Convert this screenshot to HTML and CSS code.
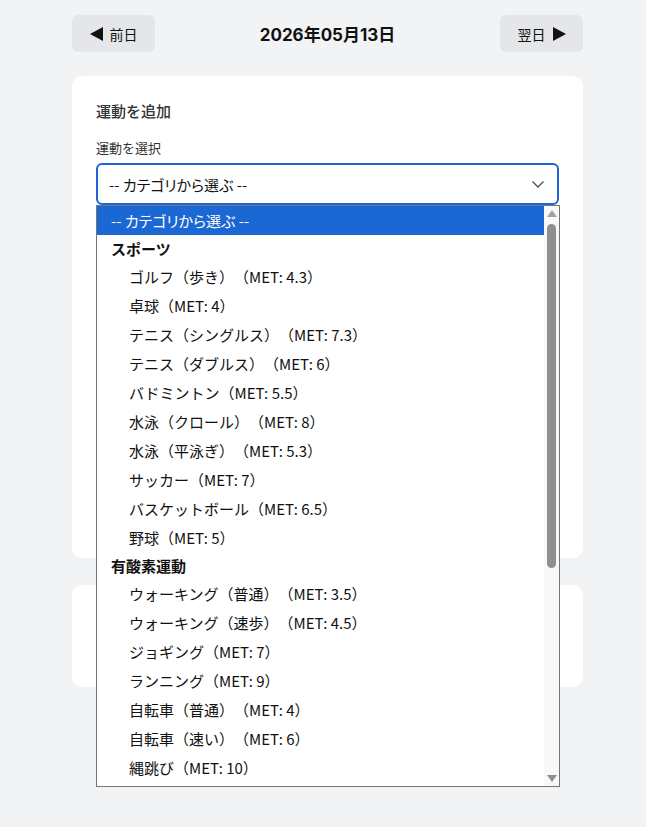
FILE: index.html
```html
<!DOCTYPE html>
<html lang="ja">
<head>
  <meta charset="UTF-8" />
  <title>運動記録</title>
  <link rel="stylesheet" href="styles.css">
</head>
<body>
  <div class="page">
    <div class="date-nav">
      <button class="nav-btn">
        <svg class="tri" width="13" height="14" viewBox="0 0 13 14"><path d="M0 7 L13 0 L13 14 Z" fill="#111"/></svg>
        <span>前日</span>
      </button>
      <h1 class="date-title">2026年05月13日</h1>
      <button class="nav-btn">
        <span>翌日</span>
        <svg class="tri" width="13" height="14" viewBox="0 0 13 14"><path d="M13 7 L0 0 L0 14 Z" fill="#111"/></svg>
      </button>
    </div>

    <div class="card card-add">
      <h2 class="card-title">運動を追加</h2>
      <label class="field-label">運動を選択</label>
      <div class="select-wrap">
        <div class="select-box">
          <span class="placeholder">-- カテゴリから選ぶ --</span>
          <svg class="chevron" width="14" height="14" viewBox="0 0 14 14"><path d="M1.5 4.5 L7 10 L12.5 4.5" fill="none" stroke="#555" stroke-width="1.4"/></svg>
        </div>

        <!-- open list of the select -->
        <div class="dropdown">
          <ul class="options">
            <li class="opt selected"><span class="placeholder">-- カテゴリから選ぶ --</span></li>
            <li class="group">スポーツ</li>
            <li class="opt sub">ゴルフ（歩き）（MET: 4.3）</li>
            <li class="opt sub">卓球（MET: 4）</li>
            <li class="opt sub">テニス（シングルス）（MET: 7.3）</li>
            <li class="opt sub">テニス（ダブルス）（MET: 6）</li>
            <li class="opt sub">バドミントン（MET: 5.5）</li>
            <li class="opt sub">水泳（クロール）（MET: 8）</li>
            <li class="opt sub">水泳（平泳ぎ）（MET: 5.3）</li>
            <li class="opt sub">サッカー（MET: 7）</li>
            <li class="opt sub">バスケットボール（MET: 6.5）</li>
            <li class="opt sub">野球（MET: 5）</li>
            <li class="group">有酸素運動</li>
            <li class="opt sub">ウォーキング（普通）（MET: 3.5）</li>
            <li class="opt sub">ウォーキング（速歩）（MET: 4.5）</li>
            <li class="opt sub">ジョギング（MET: 7）</li>
            <li class="opt sub">ランニング（MET: 9）</li>
            <li class="opt sub">自転車（普通）（MET: 4）</li>
            <li class="opt sub">自転車（速い）（MET: 6）</li>
            <li class="opt sub">縄跳び（MET: 10）</li>
          </ul>
          <div class="scrollbar">
            <span class="arrow up"></span>
            <div class="track"><div class="thumb"></div></div>
            <span class="arrow down"></span>
          </div>
        </div>
      </div>
    </div>

    <div class="card card-list"></div>
  </div>
</body>
</html>
```

FILE: styles.css
```css
html, body {
  min-height: 100%;
}

body {
  margin: 0;
  font-family: Inter, "Noto Sans CJK JP", sans-serif;
  background: #f2f3f5;
  color: #111;
}

.page {
  width: 511px;
  margin-left: 72px;
  padding-top: 15px;
  padding-bottom: 140px;
  text-spacing-trim: space-all;
}

.date-nav {
  display: flex;
  justify-content: space-between;
  align-items: center;
  height: 37px;
}

.nav-btn {
  background: #e4e6ea;
  border: none;
  border-radius: 6px;
  width: 83px;
  height: 37px;
  padding: 0;
  display: flex;
  align-items: center;
  justify-content: center;
  gap: 7px;
  font-family: "Noto Sans CJK JP", sans-serif;
  font-size: 14px;
  color: #111;
}

.date-title {
  margin: 0;
  font-size: 17px;
  font-weight: 700;
}

.card {
  background: #fff;
  border-radius: 10px;
  padding: 24px;
}

.card-add {
  margin-top: 24px;
  height: 434px;
}

.card-list {
  margin-top: 27px;
  height: 54px;
}

.card-title {
  margin: 0;
  font-family: "Noto Sans CJK JP", sans-serif;
  font-size: 15px;
  font-weight: 500;
  color: #333;
  line-height: 22px;
}

.field-label {
  display: block;
  margin-top: 17px;
  font-family: "Noto Sans CJK JP", sans-serif;
  font-size: 13px;
  color: #333;
  line-height: 18px;
}

.select-wrap {
  position: relative;
  margin-top: 6px;
}

.select-box {
  height: 38px;
  border: 2px solid #1f63d6;
  border-radius: 6px;
  display: flex;
  align-items: center;
  justify-content: space-between;
  padding: 0 12px 0 11px;
  font-family: "Noto Sans CJK JP", sans-serif;
  font-size: 15px;
}

.placeholder {
  font-feature-settings: "palt";
}

.dropdown {
  position: absolute;
  left: 0;
  top: 42px;
  width: 462px;
  height: 580px;
  background: #fff;
  border: 1px solid #767676;
  display: flex;
  z-index: 5;
}

.options {
  list-style: none;
  margin: 0;
  padding: 0;
  flex: 1;
  font-family: "Noto Sans CJK JP", sans-serif;
  font-size: 15px;
  color: #111;
}

.options li {
  height: 29px;
  line-height: 29px;
  padding-left: 14px;
  white-space: nowrap;
}

.options .selected {
  background: #1b67d3;
  color: #fff;
}

.options .group {
  height: 27px;
  line-height: 27px;
  font-weight: 700;
}

.options .sub {
  padding-left: 32px;
}

.scrollbar {
  width: 15px;
  background: #f8f8f8;
  display: flex;
  flex-direction: column;
  align-items: center;
  padding: 4px 0;
}

.arrow {
  width: 0;
  height: 0;
  border-left: 5px solid transparent;
  border-right: 5px solid transparent;
}

.arrow.up {
  border-bottom: 7px solid #a3a3a3;
}

.arrow.down {
  border-top: 7px solid #8f8f8f;
}

.track {
  flex: 1;
  width: 100%;
  padding: 7px 0;
}

.thumb {
  width: 9px;
  height: 344px;
  margin: 0 auto;
  background: #8f8f8f;
  border-radius: 5px;
}
```
